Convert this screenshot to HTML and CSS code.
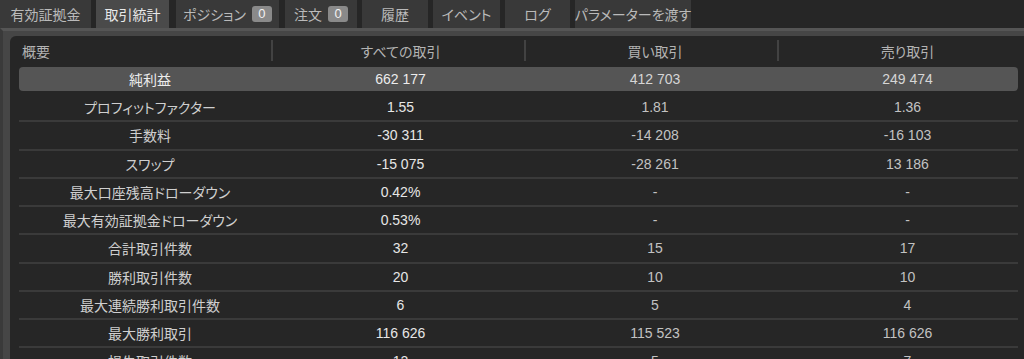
FILE: index.html
```html
<!DOCTYPE html>
<html>

<head>
	<meta charset="utf-8">
	<title>取引統計</title>

	<link rel="stylesheet" href="styles.css">
</head>

<body>

	<nav class="tabs">
		<div class="tab tab-equity">有効証拠金</div>
		<div class="tab tab-stats active">取引統計</div>
		<div class="tab tab-positions">ポジション <span class="badge">0</span></div>
		<div class="tab tab-orders">注文 <span class="badge">0</span></div>
		<div class="tab tab-history">履歴</div>
		<div class="tab tab-events">イベント</div>
		<div class="tab tab-log">ログ</div>
		<div class="tab tab-params">パラメーターを渡す</div>
	</nav>

	<div class="panel">
		<div class="sheet">
			<div class="row head">
				<div class="cell c1">概要</div>
				<div class="cell c2">すべての取引</div>
				<div class="cell c3">買い取引</div>
				<div class="cell c4">売り取引</div>
			</div>

			<div class="row total">
				<div class="cell c1">純利益</div>
				<div class="cell c2">662 177</div>
				<div class="cell c3">412 703</div>
				<div class="cell c4">249 474</div>
			</div>
			<div class="row">
				<div class="cell c1">プロフィットファクター</div>
				<div class="cell c2">1.55</div>
				<div class="cell c3">1.81</div>
				<div class="cell c4">1.36</div>
			</div>
			<div class="row">
				<div class="cell c1">手数料</div>
				<div class="cell c2">-30 311</div>
				<div class="cell c3">-14 208</div>
				<div class="cell c4">-16 103</div>
			</div>
			<div class="row">
				<div class="cell c1">スワップ</div>
				<div class="cell c2">-15 075</div>
				<div class="cell c3">-28 261</div>
				<div class="cell c4">13 186</div>
			</div>
			<div class="row">
				<div class="cell c1">最大口座残高ドローダウン</div>
				<div class="cell c2">0.42%</div>
				<div class="cell c3">-</div>
				<div class="cell c4">-</div>
			</div>
			<div class="row">
				<div class="cell c1">最大有効証拠金ドローダウン</div>
				<div class="cell c2">0.53%</div>
				<div class="cell c3">-</div>
				<div class="cell c4">-</div>
			</div>
			<div class="row">
				<div class="cell c1">合計取引件数</div>
				<div class="cell c2">32</div>
				<div class="cell c3">15</div>
				<div class="cell c4">17</div>
			</div>
			<div class="row">
				<div class="cell c1">勝利取引件数</div>
				<div class="cell c2">20</div>
				<div class="cell c3">10</div>
				<div class="cell c4">10</div>
			</div>
			<div class="row">
				<div class="cell c1">最大連続勝利取引件数</div>
				<div class="cell c2">6</div>
				<div class="cell c3">5</div>
				<div class="cell c4">4</div>
			</div>
			<div class="row">
				<div class="cell c1">最大勝利取引</div>
				<div class="cell c2">116 626</div>
				<div class="cell c3">115 523</div>
				<div class="cell c4">116 626</div>
			</div>
			<div class="row">
				<div class="cell c1">損失取引件数</div>
				<div class="cell c2">12</div>
				<div class="cell c3">5</div>
				<div class="cell c4">7</div>
			</div>
		</div>
	</div>

</body>

</html>
```

FILE: styles.css
```css
body {
	margin: 0px;
	background: #262626;
	color: #cfcfcf;
	font-family: "Liberation Sans", "Noto Sans CJK JP", sans-serif;
	font-size: 14px;
	font-feature-settings: "palt";
	height: 359px;
	overflow: hidden;
}

/* tab strip */

.tabs {
	display: flex;
	height: 28px;
}

.tab {
	display: flex;
	align-items: center;
	justify-content: center;
	gap: 6px;
	height: 28px;
	margin-right: 5px;
	background: #393939;
	color: #bababa;
	white-space: nowrap;
}

.tab.active {
	background: #4a4a4a;
	color: #e8e8e8;
}

.tab-equity {
	width: 91px;
}

.tab-stats {
	width: 73px;
	margin-right: 7px;
}

.tab-positions {
	width: 103px;
	margin-right: 6px;
}

.tab-orders {
	width: 72px;
}

.tab-history {
	width: 66px;
}

.tab-events {
	width: 67px;
}

.tab-log {
	width: 65px;
}

.tab-params {
	width: 116px;
}

.badge {
	display: inline-block;
	min-width: 20px;
	height: 16px;
	line-height: 16px;
	border-radius: 3px;
	background: #8a8a8a;
	color: #f2f2f2;
	text-align: center;
	font-size: 13px;
}

/* panel */

.panel {
	background: #464646;
	border-top: 3px solid #555555;
	border-left: 3px solid #3a3a3a;
	padding: 5px 0px 0px 7px;
}

.sheet {
	background: #262626;
	border-top-left-radius: 6px;
	padding: 1px 6px 0px 9px;
}

.row {
	display: grid;
	grid-template-columns: 252px 253px 253px 241px;
	align-items: center;
	height: 28.25px;
	box-sizing: border-box;
	border-bottom: 2px solid #3a3a3a;
}

.cell {
	text-align: center;
	white-space: nowrap;
}

.c1 {
	padding-left: 10px;
}

.c2 {
	color: #e6e6e6;
	padding-left: 6px;
}

.c3 {
	padding-left: 9px;
	color: #c2c2c2;
}

.c4 {
	padding-left: 20px;
	color: #c2c2c2;
}

.row.head {
	height: 28px;
	border-bottom: none;
	color: #b3b3b3;
}

.row.head .cell {
	position: relative;
	color: #b3b3b3;
}

.row.head .c1 {
	text-align: left;
	padding-left: 3px;
}

.row.head .cell + .cell::before {
	content: "";
	position: absolute;
	left: 0px;
	top: calc(50% - 11px);
	width: 2px;
	height: 21px;
	background: #424242;
}

.row.total {
	height: 24px;
	margin: 2px 0px 3px;
	border-bottom: none;
	border-radius: 4px;
	background: #555555;
}

.row.total .c1,
.row.total .c2 {
	color: #ececec;
}

.row.total .c3,
.row.total .c4 {
	color: #d6d6d6;
}
```
